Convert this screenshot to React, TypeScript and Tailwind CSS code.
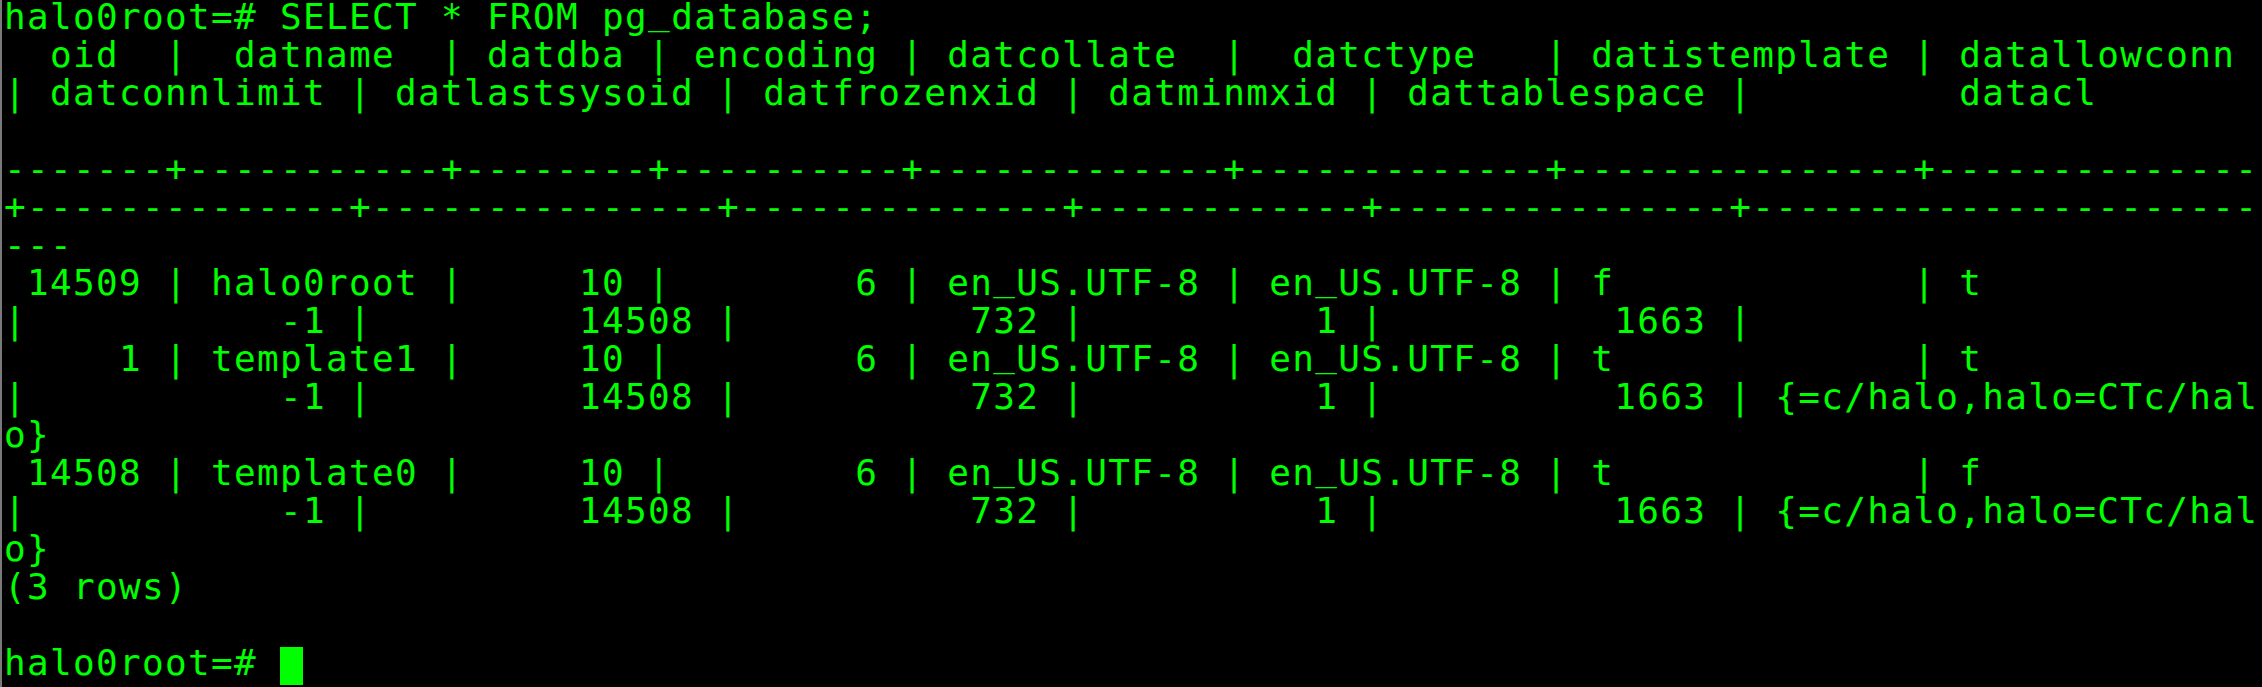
import React from "react";

const lines: string[] = [
  "halo0root=# SELECT * FROM pg_database;",
  "  oid  |  datname  | datdba | encoding | datcollate  |  datctype   | datistemplate | datallowconn ",
  "| datconnlimit | datlastsysoid | datfrozenxid | datminmxid | dattablespace |         datacl",
  "",
  "-------+-----------+--------+----------+-------------+-------------+---------------+--------------",
  "+--------------+---------------+--------------+------------+---------------+----------------------",
  "---",
  " 14509 | halo0root |     10 |        6 | en_US.UTF-8 | en_US.UTF-8 | f             | t            ",
  "|           -1 |         14508 |          732 |          1 |          1663 | ",
  "     1 | template1 |     10 |        6 | en_US.UTF-8 | en_US.UTF-8 | t             | t            ",
  "|           -1 |         14508 |          732 |          1 |          1663 | {=c/halo,halo=CTc/hal",
  "o}",
  " 14508 | template0 |     10 |        6 | en_US.UTF-8 | en_US.UTF-8 | t             | f            ",
  "|           -1 |         14508 |          732 |          1 |          1663 | {=c/halo,halo=CTc/hal",
  "o}",
  "(3 rows)",
  "",
];

function Line({ text }: { text: string }) {
  const parts = text.split("_");
  return (
    <div className="h-[38px] leading-[32px]">
      {parts.map((p, i) => (
        <React.Fragment key={i}>
          {p}
          {i < parts.length - 1 && (
            <span className="inline-block -translate-y-[5px]">_</span>
          )}
        </React.Fragment>
      ))}
    </div>
  );
}

export default function App() {
  return (
    <div className="w-[2262px] h-[687px] overflow-hidden bg-black border-l-2 border-[#7a7a7a]">
      <div
        className="pl-[2px] pt-[1px] text-[#00ff00] text-[36px] tracking-[1.33px] whitespace-pre"
        style={{ fontFamily: '"DejaVu Sans Mono", "Liberation Mono", monospace' }}
      >
        {lines.map((l, i) => (
          <Line key={i} text={l} />
        ))}
        <div className="h-[38px] leading-[32px]">
          {"halo0root=# "}
          <span className="inline-block align-top w-[23px] h-[38px] bg-[#00ff00]" />
        </div>
      </div>
    </div>
  );
}
